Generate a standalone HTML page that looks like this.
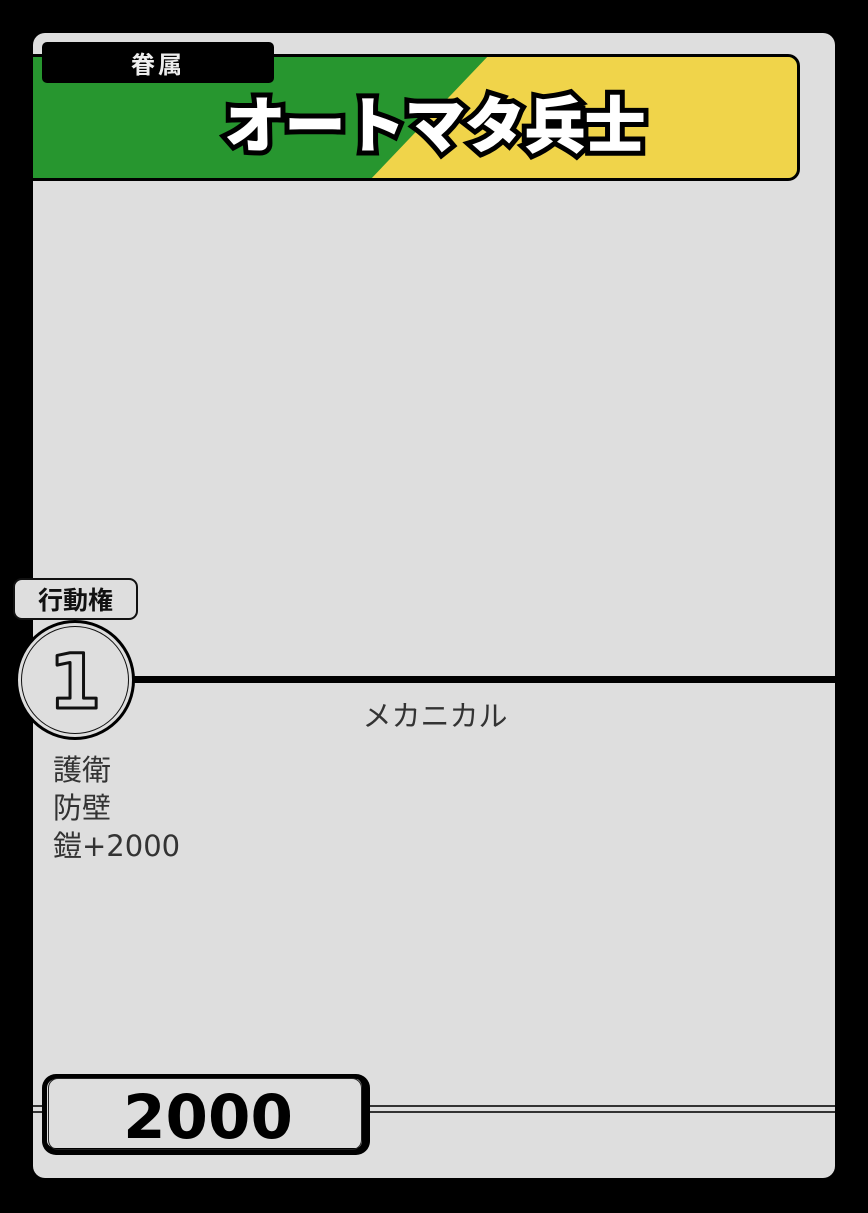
<!DOCTYPE html>
<html><head><meta charset="utf-8"><style>
*{margin:0;padding:0;box-sizing:border-box}
body{width:868px;height:1213px;background:#000;position:relative;overflow:hidden;font-family:"DejaVu Sans","Noto Sans CJK JP",sans-serif}
.card{position:absolute;left:33px;top:33px;width:802px;height:1145px;background:#dedede;border-radius:12px}
.banner{position:absolute;left:30px;top:54px;width:770px;height:127px;border:3px solid #000;border-radius:0 12px 12px 0;overflow:hidden;background:#27962f}
.abs{position:absolute}
.tag{left:42px;top:42px;width:232px;height:41px;background:#000;border-radius:5px;color:#eee;font-weight:bold;font-size:24px;text-align:center;line-height:41px;letter-spacing:3px;font-family:"Noto Sans CJK JP",sans-serif}
.title{left:135px;width:600px;top:80px;text-align:center;font-family:"WenQuanYi Zen Hei","Noto Sans CJK JP",sans-serif;font-weight:bold;font-size:60px;line-height:84px}
.t1{color:#000;-webkit-text-stroke:12px #000;z-index:4}
.t2{color:#ffffff;-webkit-text-stroke:2px #fff;z-index:5}
</style></head><body>
<div class="card"></div>
<div class="banner">
<svg width="770" height="127" style="position:absolute;left:-3px;top:-3px"><polygon points="460,0 770,0 770,127 339,127" fill="#f0d44a"/></svg>
</div>
<div class="abs tag">眷属</div>
<div class="abs title t1">オートマタ兵士</div>
<div class="abs title t2">オートマタ兵士</div>

<div class="abs" style="left:130px;top:676px;width:705px;height:7px;background:#000"></div>
<div class="abs" style="left:13px;top:578px;width:125px;height:42px;border:2px solid #111;border-radius:9px;background:#dedede;font-weight:bold;font-size:25px;text-align:center;line-height:38px;color:#111;font-family:'Noto Sans CJK JP',sans-serif">行動権</div>
<div class="abs" style="left:15px;top:620px;width:120px;height:120px;border:3px solid #000;border-radius:50%;background:#dedede"></div>
<div class="abs" style="left:21px;top:626px;width:108px;height:108px;border:1.5px solid #111;border-radius:50%"></div>
<svg class="abs" style="left:15px;top:620px" width="120" height="120"><text x="60" y="88" text-anchor="middle" font-family="DejaVu Sans" font-weight="bold" font-size="76" fill="#dedede" stroke="#111" stroke-width="3" stroke-linejoin="round">1</text></svg>

<div class="abs" style="left:235px;top:696px;width:400px;text-align:center;font-size:29px;color:#333;line-height:40px">メカニカル</div>
<div class="abs" style="left:53px;top:751px;font-size:29px;color:#333;line-height:38px">護衛<br>防壁<br>鎧+2000</div>

<div class="abs" style="left:33px;top:1105px;width:802px;height:2px;background:#333"></div>
<div class="abs" style="left:33px;top:1111px;width:802px;height:2px;background:#333"></div>
<div class="abs" style="left:42px;top:1074px;width:328px;height:81px;border:5px solid #000;border-right-width:8px;border-bottom-width:7px;border-radius:14px;background:#dedede"></div>
<div class="abs" style="left:48px;top:1078px;width:314px;height:72px;border:1.5px solid #222;border-radius:10px"></div>
<div class="abs" style="left:48px;top:1078px;width:320px;text-align:center;font-size:61px;font-weight:bold;color:#000;line-height:80px">2000</div>
</body></html>
